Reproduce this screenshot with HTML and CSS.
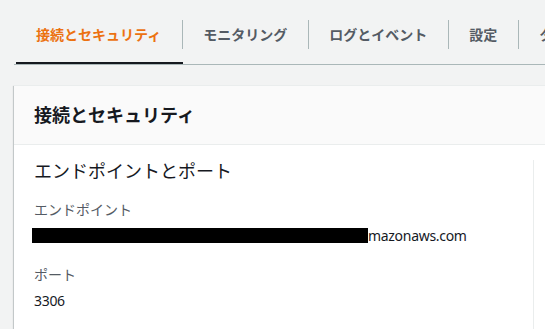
FILE: index.html
```html
<!DOCTYPE html>
<html lang="ja">
<head>
<meta charset="utf-8">
<link rel="stylesheet" href="styles.css">
</head>
<body>
<div class="page">
  <div class="tabs">
    <div class="tab active"><span class="tab-label">接続とセキュリティ</span></div>
    <div class="tab"><span class="tab-label">モニタリング</span></div>
    <div class="tab"><span class="tab-label">ログとイベント</span></div>
    <div class="tab"><span class="tab-label">設定</span></div>
    <div class="tab"><span class="tab-label">タグ</span></div>
  </div>
  <div class="panel">
    <div class="panel-header">接続とセキュリティ</div>
    <div class="panel-body">
      <div class="column">
        <div class="col-title">エンドポイントとポート</div>
        <div class="field">
          <div class="label">エンドポイント</div>
          <div class="value"><span class="redact"></span>mazonaws.com</div>
        </div>
        <div class="field">
          <div class="label">ポート</div>
          <div class="value">3306</div>
        </div>
      </div>
    </div>
  </div>
</div>
</body>
</html>
```
FILE: styles.css
```css
html, body {
  margin: 0;
  padding: 0;
  overflow: hidden;
  background: #f2f3f3;
  font-family: "Noto Sans", "Noto Sans CJK JP", sans-serif;
  color: #16191f;
}
.page {
  width: 545px;
  height: 329px;
  overflow: hidden;
  padding-left: 14px;
  box-sizing: border-box;
}
.tabs {
  display: flex;
  flex-wrap: nowrap;
  width: 700px;
  padding-top: 20px;
  padding-left: 2px;
  border-bottom: 1px solid #aab7b8;
}
.tab {
  flex: none;
  padding-bottom: 13px;
  border-bottom: 2px solid transparent;
}
.tab.active {
  border-bottom-color: #16191f;
}
.tab-label {
  display: block;
  height: 29px;
  line-height: 29px;
  padding: 0 21px 0 20px;
  border-right: 1px solid #aab7b8;
  font-size: 14px;
  font-weight: 700;
  color: #545b64;
  white-space: nowrap;
}
.tab.active .tab-label {
  color: #ec7211;
}
.panel {
  margin-top: 20px;
  width: 640px;
  background: #fff;
  border-top: 1px solid #eaeded;
  box-shadow: 0 1px 1px 0 rgba(0, 28, 36, 0.3), 1px 1px 1px 0 rgba(0, 28, 36, 0.15), -1px 1px 1px 0 rgba(0, 28, 36, 0.15);
}
.panel-header {
  height: 58px;
  line-height: 58px;
  padding: 0 20px;
  background: #fafafa;
  border-bottom: 1px solid #eaeded;
  font-size: 18px;
  font-weight: 700;
}
.panel-body {
  padding: 15px 0 20px 20px;
}
.column {
  width: 499px;
  border-right: 1px solid #eaeded;
  padding-bottom: 40px;
}
.col-title {
  font-size: 18px;
  line-height: 22px;
  font-weight: 400;
}
.field {
  margin-top: 18px;
}
.label {
  font-size: 14px;
  line-height: 20px;
  color: #545b64;
}
.value {
  margin-top: 5px;
  font-size: 14px;
  line-height: 22px;
  letter-spacing: -0.3px;
  color: #16191f;
}
.redact {
  display: inline-block;
  width: 336px;
  height: 15px;
  margin-left: -2px;
  background: #000;
  vertical-align: -2px;
}
```
